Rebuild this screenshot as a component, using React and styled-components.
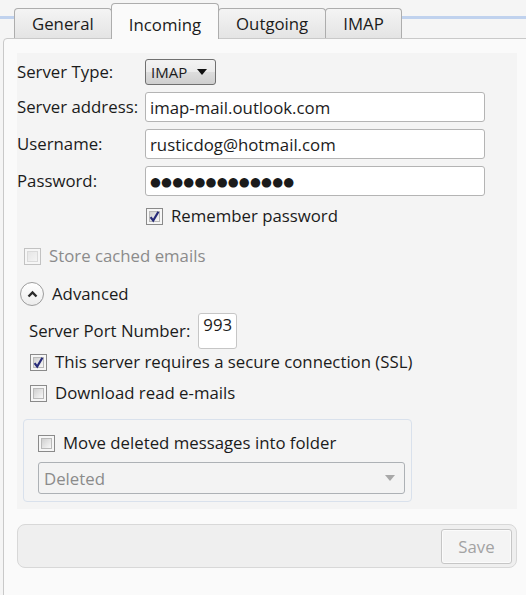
import React from "react";
import styled, { createGlobalStyle, css } from "styled-components";

const FONT = `"Open Sans", "Noto Sans", "Segoe UI", sans-serif`;
const SIZE = "16.8px";

const Global = createGlobalStyle`
  html, body { margin: 0; padding: 0; background: #f5f5f5; }
  body { font-family: ${FONT}; font-size: ${SIZE}; color: #1b1b1b; }
  * { box-sizing: border-box; }
`;

const Page = styled.div`
  width: 526px;
  height: 595px;
  overflow: hidden;
  background: #f5f5f5;
`;

/* tab header with the thin blue rule running behind it */
const TabStrip = styled.div`
  display: flex;
  align-items: flex-end;
  height: 38px;
  padding-left: 14px;
  background: linear-gradient(
    to bottom,
    transparent 16px,
    #c0d2ee 16px,
    #c0d2ee 19px,
    transparent 19px
  );
`;

const Tab = styled.div`
  height: ${(p) => (p.$active ? 36 : 30)}px;
  margin-bottom: ${(p) => (p.$active ? -1 : 0)}px;
  margin-left: -1px;
  padding: 0 17px 3px;
  display: flex;
  align-items: flex-end;
  line-height: 22px;
  font-size: ${SIZE};
  color: #1b1b1b;
  border: 1px solid #adadad;
  border-bottom: 0;
  border-radius: 4px 4px 0 0;
  &:first-child { margin-left: 0; }
  ${(p) =>
    p.$active
      ? css`
          position: relative;
          z-index: 1;
          background: #fafafa;
        `
      : css`
          background: linear-gradient(to bottom, #f4f4f4, #e4e4e4);
        `}
`;

const Panel = styled.div`
  margin-left: 3px;
  margin-right: -20px;
  height: 600px;
  border: 1px solid #c9c9c9;
  border-top-left-radius: 4px;
  background: #fafafa;
  padding: 14px 0 0 13px;
`;

const FormArea = styled.div`
  width: 500px;
  height: 456px;
  background: #f4f4f4;
  display: flex;
  flex-direction: column;
  align-items: flex-start;
`;

const FieldGrid = styled.div`
  display: grid;
  grid-template-columns: 128px 340px;
  row-gap: 7px;
  align-items: center;
  margin-top: 6px;
`;

const Label = styled.span`
  font-size: ${SIZE};
  line-height: 22px;
  color: ${(p) => (p.$disabled ? "#8b8b8b" : "#1b1b1b")};
  white-space: nowrap;
`;

const ComboButton = styled.div`
  width: 71px;
  height: 26px;
  display: flex;
  align-items: center;
  justify-content: space-between;
  padding: 0 8px 0 5px;
  border: 1px solid #707070;
  border-radius: 3px;
  background: linear-gradient(to bottom, #f3f3f3 0%, #ebebeb 50%, #dddddd 51%, #cfcfcf 100%);
  font-size: 15px;
`;

const TextBox = styled.div`
  height: 30px;
  width: 340px;
  display: flex;
  align-items: center;
  padding: 0 4px;
  background: #ffffff;
  border: 1px solid #b4b4b4;
  border-radius: 3px;
  font-size: ${SIZE};
  white-space: nowrap;
  overflow: hidden;
`;

const Dots = styled.span`
  font-size: 12.5px;
  letter-spacing: 0.2px;
  font-family: "DejaVu Sans", sans-serif;
`;

const CheckRow = styled.div`
  display: flex;
  align-items: center;
  gap: 8px;
  height: 22px;
  margin-top: ${(p) => p.$top || 0}px;
  margin-left: ${(p) => p.$left || 0}px;
`;

const Box = styled.span`
  position: relative;
  width: 17px;
  height: 17px;
  flex: none;
  border: 1px solid ${(p) => (p.$disabled ? "#c2c2c2" : "#8a8a8a")};
  background: #f6f6f6;
  display: flex;
  align-items: center;
  justify-content: center;
  &::before {
    content: "";
    position: absolute;
    inset: 2px;
    border: 1px solid ${(p) => (p.$disabled ? "#dadada" : "#b9b9b9")};
    background: ${(p) =>
      p.$disabled
        ? "linear-gradient(135deg, #e6e6e6, #f4f4f4)"
        : "linear-gradient(135deg, #cfcfcf, #f8f8f8)"};
  }
  svg { position: relative; }
`;

const CheckBox = ({ checked, disabled }) => (
  <Box $disabled={disabled}>
    {checked && (
      <svg width="13" height="13" viewBox="0 0 13 13">
        <path d="M2.6 7.2 L5.2 10.6 L10.4 1.8" fill="none" stroke="#262a78" strokeWidth="2.2" strokeLinejoin="miter" />
      </svg>
    )}
  </Box>
);

const ExpanderRow = styled.div`
  display: flex;
  align-items: center;
  gap: 8px;
  height: 24px;
  margin-top: 15px;
  margin-left: 3px;
`;

const Circle = styled.span`
  width: 24px;
  height: 24px;
  border-radius: 50%;
  border: 1px solid #9c9c9c;
  background: linear-gradient(to bottom, #ffffff, #ececec);
  display: flex;
  align-items: center;
  justify-content: center;
`;

const PortRow = styled.div`
  display: flex;
  align-items: center;
  gap: 8px;
  margin-top: 7px;
  margin-left: 12px;
`;

const PortBox = styled.div`
  width: 39px;
  height: 36px;
  padding: 0 4px;
  line-height: 22px;
  background: #ffffff;
  border: 1px solid #c6c6c6;
  border-radius: 3px;
  font-size: ${SIZE};
`;

const GroupBox = styled.div`
  width: 389px;
  margin-top: 15px;
  margin-left: 6px;
  padding: 12px 6px 7px 14px;
  border: 1px solid #d9e1ec;
  border-radius: 4px;
  display: flex;
  flex-direction: column;
  gap: 8px;
`;

const FolderCombo = styled.div`
  height: 32px;
  display: flex;
  align-items: center;
  justify-content: space-between;
  padding: 0 9px 0 5px;
  border: 1px solid #adb1b5;
  border-radius: 3px;
  background: #f3f3f3;
  color: #8b8b8b;
  font-size: ${SIZE};
`;

const ActionBar = styled.div`
  width: 500px;
  height: 44px;
  margin-top: 15px;
  display: flex;
  justify-content: flex-end;
  align-items: center;
  padding-right: 4px;
  background: #efefef;
  border: 1px solid #d8d8d8;
  border-radius: 8px;
`;

const SaveButton = styled.div`
  width: 71px;
  height: 35px;
  display: flex;
  align-items: center;
  justify-content: center;
  border: 1px solid #c6c6c6;
  border-radius: 3px;
  background: #f4f4f4;
  box-shadow: inset 0 0 0 1px #fbfbfb;
  color: #a3a3a3;
  font-size: ${SIZE};
`;

const Arrow = ({ color }) => (
  <svg width="10" height="6" viewBox="0 0 10 6">
    <path d="M0 0 H10 L5 6 Z" fill={color} />
  </svg>
);

export default function App() {
  return (
    <Page>
      <Global />
      <TabStrip>
        <Tab>General</Tab>
        <Tab $active>Incoming</Tab>
        <Tab>Outgoing</Tab>
        <Tab>IMAP</Tab>
      </TabStrip>
      <Panel>
        <FormArea>
          <FieldGrid>
            <Label>Server Type:</Label>
            <ComboButton>
              <span>IMAP</span>
              <Arrow color="#111" />
            </ComboButton>
            <Label>Server address:</Label>
            <TextBox>imap-mail.outlook.com</TextBox>
            <Label>Username:</Label>
            <TextBox>rusticdog@hotmail.com</TextBox>
            <Label>Password:</Label>
            <TextBox>
              <Dots>{"\u25CF".repeat(13)}</Dots>
            </TextBox>
          </FieldGrid>

          <CheckRow $top={9} $left={129}>
            <CheckBox checked />
            <Label>Remember password</Label>
          </CheckRow>

          <CheckRow $top={18} $left={7}>
            <CheckBox disabled />
            <Label $disabled>Store cached emails</Label>
          </CheckRow>

          <ExpanderRow>
            <Circle>
              <svg width="11" height="8" viewBox="0 0 11 8">
                <path d="M1.5 6.5 L5.5 2.5 L9.5 6.5" fill="none" stroke="#2a2a2a" strokeWidth="2.4" />
              </svg>
            </Circle>
            <Label>Advanced</Label>
          </ExpanderRow>

          <PortRow>
            <Label>Server Port Number:</Label>
            <PortBox>993</PortBox>
          </PortRow>

          <CheckRow $top={2} $left={13}>
            <CheckBox checked />
            <Label>This server requires a secure connection (SSL)</Label>
          </CheckRow>

          <CheckRow $top={9} $left={13}>
            <CheckBox />
            <Label>Download read e-mails</Label>
          </CheckRow>

          <GroupBox>
            <CheckRow>
              <CheckBox />
              <Label>Move deleted messages into folder</Label>
            </CheckRow>
            <FolderCombo>
              <span>Deleted</span>
              <Arrow color="#a8a8a8" />
            </FolderCombo>
          </GroupBox>
        </FormArea>

        <ActionBar>
          <SaveButton>Save</SaveButton>
        </ActionBar>
      </Panel>
    </Page>
  );
}
